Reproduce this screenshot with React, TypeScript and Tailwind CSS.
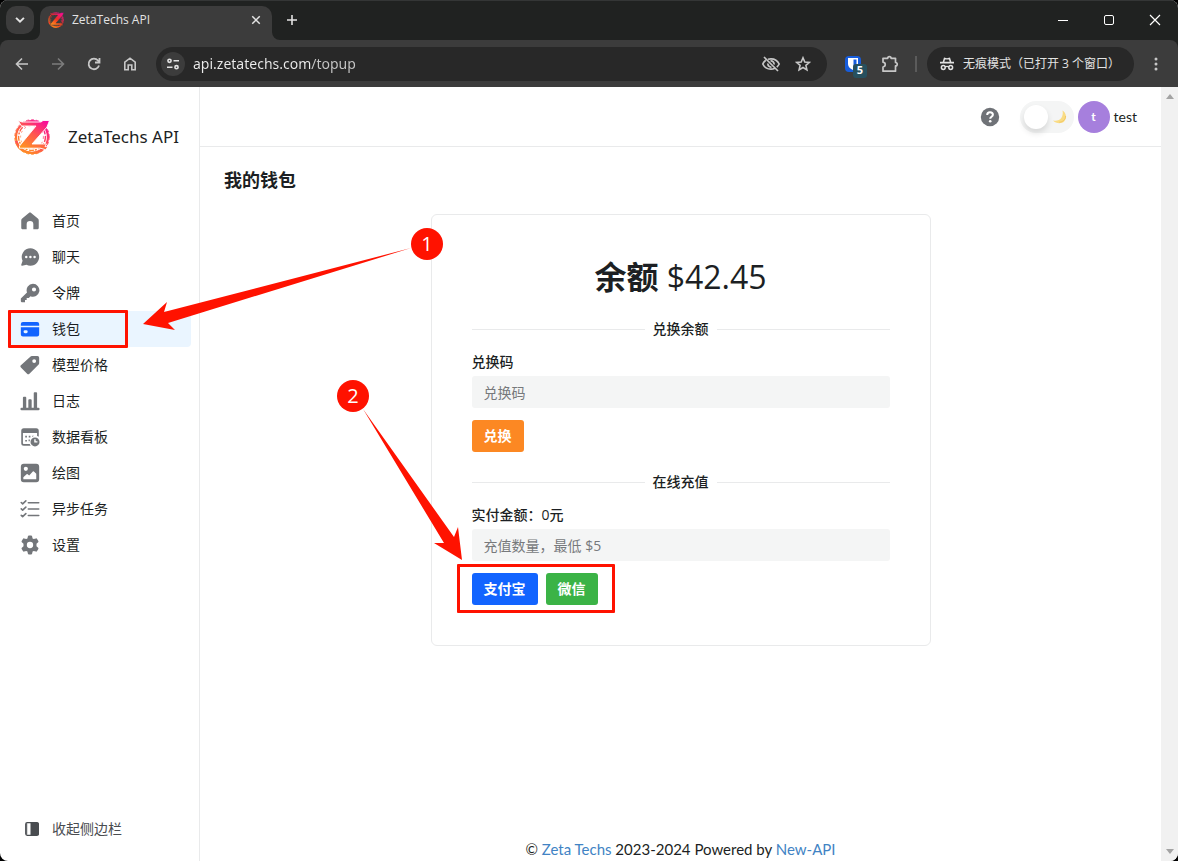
import React from "react";

const UI = "font-['Open_Sans','Noto_Sans_CJK_SC',sans-serif]";

function LogoMark({ className, dark = false }: { className: string; dark?: boolean }) {
  const id = dark ? "logo-tab" : "logo-side";
  return (
    <svg viewBox="0 0 36 36" className={className} aria-hidden="true">
      <defs>
        <linearGradient id={id} x1="0.15" y1="1" x2="0.85" y2="0">
          <stop offset="0" stopColor="#ff9a1c" />
          <stop offset="0.5" stopColor={dark ? "#ee2f22" : "#ff5a4c"} />
          <stop offset="1" stopColor="#f80a9c" />
        </linearGradient>
      </defs>
      <g fill="none" stroke={`url(#${id})`}>
        <circle cx="18" cy="18" r="16" strokeWidth="2.200" />
        <circle cx="18" cy="18" r="13.400" strokeWidth="1.400" strokeDasharray="5 1.500 2 1" />
        <circle cx="18" cy="18" r="11.400" strokeWidth="0.700" strokeDasharray="2 3" />
        <path d="M2 22c2 7 8 11.500 16 12 6 0 11-3 14-8" strokeWidth="2.600" />
        <circle cx="18" cy="18" r="17.300" strokeWidth="0.800" strokeDasharray="3 2" />
      </g>
      <path
        d="M4 1.500l3.500 5.500H22L5.500 27v2.200h21l5 1.500 2.500-2.700-3-.5 1.500-2.500H18L33 8l2.500-6.500H29l-2 1.500H8z"
        fill={`url(#${id})`}
        stroke={dark ? "#3c3c3c" : "#fff"}
        strokeWidth="0.900"
      />
    </svg>
  );
}

const icons: Record<string, React.ReactNode> = {
  home: (
    <path d="M12 1.800c.5 0 1 .2 1.400.5l8 6.700c.7.600 1.100 1.400 1.100 2.300V20c0 1.100-.9 2-2 2H16v-6a4 4 0 0 0-8 0v6H3.500c-1.100 0-2-.9-2-2v-8.700c0-.9.4-1.700 1.100-2.300l8-6.700c.4-.3.9-.5 1.400-.5z" />
  ),
  chat: (
    <path
      fillRule="evenodd"
      d="M12.500 1.500a10.500 10.500 0 1 1-4.700 19.900L2.500 22.500c-.8.100-1.300-.6-1-1.300l1.600-4.600A10.500 10.500 0 0 1 12.500 1.500zM7.500 10.500a1.500 1.500 0 1 0 0 3 1.500 1.500 0 0 0 0-3zm5 0a1.500 1.500 0 1 0 0 3 1.500 1.500 0 0 0 0-3zm5 0a1.500 1.500 0 1 0 0 3 1.500 1.500 0 0 0 0-3z"
    />
  ),
  key: (
    <path
      fillRule="evenodd"
      d="M15.500 1a7.700 7.700 0 1 1-2.900 14.800L10.500 18H8v2.500H6V23H2c-.6 0-1-.4-1-1v-3.500l7.400-7.200A7.700 7.700 0 0 1 15.500 1zm1.300 4.300a2.500 2.500 0 1 0 0 5 2.500 2.500 0 0 0 0-5z"
    />
  ),
  card: (
    <path
      fillRule="evenodd"
      d="M3.500 3.500h17a2.500 2.500 0 0 1 2.500 2.500v2H1V6a2.500 2.500 0 0 1 2.500-2.500zM1 10h22v8.500a2.500 2.500 0 0 1-2.500 2.500h-17A2.500 2.500 0 0 1 1 18.500zm5 3.500a1.500 1.500 0 0 0 0 3.500h1.500a1.500 1.500 0 0 0 0-3.500z"
    />
  ),
  tag: (
    <path
      fillRule="evenodd"
      d="M12.700 1.900c.4-.4.9-.6 1.400-.6H21a2 2 0 0 1 2 2V10c0 .5-.2 1-.6 1.400L11.300 22.500a2 2 0 0 1-2.800 0L1.100 15a2 2 0 0 1 0-2.800zM17 5a2.300 2.300 0 1 0 0 4.600A2.300 2.300 0 0 0 17 5z"
    />
  ),
  bars: (
    <path d="M2 20h20a1.500 1.500 0 0 1 0 3H2a1.500 1.500 0 0 1 0-3zM4.500 7h2c.6 0 1 .4 1 1v12h-4V8c0-.6.400-1 1-1zM11 10h2c.6 0 1 .4 1 1v9h-4v-9c0-.6.400-1 1-1zM17.500 1.500h2c.6 0 1 .4 1 1V20h-4V2.500c0-.6.400-1 1-1z" />
  ),
  board: (
    <>
      <path
        fillRule="evenodd"
        d="M4.500 1.500h15a3 3 0 0 1 3 3v7.300a7 7 0 0 0-2-.9V7.200h-17v12.300a1 1 0 0 0 1 1h7.200c.3.800.7 1.400 1.200 2H4.500a3 3 0 0 1-3-3v-15a3 3 0 0 1 3-3z"
      />
      <path d="M6.300 10.500h2v2h-2zM10.500 10.500h2v2h-2zM14.700 10.500h2l-2 1.500zM6.300 15.500h2v2h-2zM10.300 15h1.500v2h-1.500z" />
      <path fillRule="evenodd" d="M18 12.500a5.400 5.400 0 1 1 0 10.800 5.400 5.400 0 0 1 0-10.800zm-.9 2.300v3.800h3.800V17h-2.100v-2.200z" />
    </>
  ),
  image: (
    <path
      fillRule="evenodd"
      d="M4.500 1h15A3.500 3.500 0 0 1 23 4.500v15a3.500 3.500 0 0 1-3.500 3.500h-15A3.500 3.500 0 0 1 1 19.500v-15A3.500 3.500 0 0 1 4.500 1zM7 4.500a2.500 2.500 0 1 0 0 5 2.500 2.500 0 0 0 0-5zM4 19.500h15.500V13l-2.800-2.700a.9.900 0 0 0-1.300 0L11 15l-1.800-1.500a1 1 0 0 0-1.300 0L4 17z"
    />
  ),
  checks: (
    <g fill="none" stroke="currentColor" strokeWidth="1.900" strokeLinecap="round" strokeLinejoin="round">
      <path d="M10 4.500h12.500M10 12h12.500M10 19.800h12.500" />
      <path d="M1.500 4.200l1.700 1.600L7 2.200M1.500 11.800l1.700 1.600L7 9.800M1.500 19.600l1.700 1.600L7 17.600" />
    </g>
  ),
  gear: (
    <path
      fillRule="evenodd"
      d="M9.500 1.500c.1-.5.6-.9 1.200-.9h2.600c.6 0 1.100.4 1.200.9l.6 2.600 1.400.8 2.600-.8c.5-.2 1.100.1 1.400.6l1.500 2.600c.3.500.2 1.100-.2 1.500l-2 1.800v2.800l2 1.800c.4.400.5 1 .2 1.500l-1.500 2.600c-.3.500-.9.800-1.400.6l-2.600-.8-1.400.8-.6 2.600c-.1.500-.6.900-1.200.9h-2.600c-.6 0-1.100-.4-1.200-.9l-.6-2.600-1.400-.8-2.600.8c-.5.200-1.100-.1-1.400-.6L2 16.700c-.3-.5-.2-1.100.2-1.500l2-1.800v-2.800l-2-1.800C1.800 8.400 1.700 7.800 2 7.300l1.500-2.600c.3-.5.900-.8 1.400-.6l2.600.8 1.400-.8zM12 8.200a3.800 3.800 0 1 0 0 7.600 3.800 3.800 0 0 0 0-7.600z"
    />
  ),
};

const menu = [
  { label: "首页", icon: "home" },
  { label: "聊天", icon: "chat" },
  { label: "令牌", icon: "key" },
  { label: "钱包", icon: "card", active: true },
  { label: "模型价格", icon: "tag" },
  { label: "日志", icon: "bars" },
  { label: "数据看板", icon: "board" },
  { label: "绘图", icon: "image" },
  { label: "异步任务", icon: "checks" },
  { label: "设置", icon: "gear" },
];

function Stroke({ children, className = "size-4", width = 1.6 }: { children: React.ReactNode; className?: string; width?: number }) {
  return (
    <svg viewBox="0 0 16 16" className={className} fill="none" stroke="currentColor" strokeWidth={width} aria-hidden="true">
      {children}
    </svg>
  );
}

function TabStrip() {
  return (
    <div className="flex h-10 items-end border-t border-[#343636] bg-[#202221] text-[#e3e3e3]">
      <button aria-label="搜索标签页" className="mb-1.5 ml-1.5 flex size-7 items-center justify-center rounded-[10px] bg-[#3c3c3c]">
        <Stroke className="size-3.5" width={2.2}>
          <path d="M3.500 5.500L8 10l4.500-4.500" />
        </Stroke>
      </button>
      <div className="relative ml-1.5 flex h-[34px] w-[232px] items-center rounded-t-[10px] bg-[#3c3c3c] pb-1.5 pl-2 pr-2">
        <svg viewBox="0 0 8 8" className="absolute -left-2 bottom-0 size-2" fill="#3c3c3c" aria-hidden="true"><path d="M8 0v8H0a8 8 0 0 0 8-8z" /></svg>
        <svg viewBox="0 0 8 8" className="absolute -right-2 bottom-0 size-2" fill="#3c3c3c" aria-hidden="true"><path d="M0 0v8h8a8 8 0 0 1-8-8z" /></svg>
        <LogoMark className="size-4" dark />
        <span className="ml-2 flex-1 text-xs">ZetaTechs API</span>
        <button aria-label="关闭标签页" className="flex size-4 items-center justify-center">
          <Stroke className="size-3" width={2}><path d="M3 3l10 10M13 3L3 13" /></Stroke>
        </button>
      </div>
      <button aria-label="新标签页" className="mb-3 ml-3 flex size-4 items-center justify-center">
        <Stroke className="size-4"><path d="M8 3v10M3 8h10" /></Stroke>
      </button>
      <div className="mb-3 ml-auto mr-[15px] flex gap-[30px] text-white">
        <button aria-label="最小化"><Stroke width={1}><path d="M3 8.500h10" /></Stroke></button>
        <button aria-label="最大化"><Stroke width={1}><rect x="3.500" y="3.500" width="9" height="9" rx="1.500" /></Stroke></button>
        <button aria-label="关闭"><Stroke width={1.2}><path d="M3 3l10 10M13 3L3 13" /></Stroke></button>
      </div>
    </div>
  );
}

function Toolbar() {
  return (
    <div className="bg-[#202221]">
      <div className="flex h-[47px] items-center rounded-t-lg bg-[#3c3c3c] pl-3.5 pr-3.5 text-[#c7c7c7]">
        <div className="flex gap-5">
          <button aria-label="后退"><Stroke><path d="M14 8H3M8 2.500L2.500 8 8 13.500" /></Stroke></button>
          <button aria-label="前进" className="text-[#7c7c7c]"><Stroke><path d="M2 8h11M8 2.500L13.500 8 8 13.500" /></Stroke></button>
          <button aria-label="重新加载">
            <Stroke width={1.8}><path d="M13 9.500A5.300 5.300 0 1 1 12 4.500L13.500 6M13.500 2v4.500H9" /></Stroke>
          </button>
          <button aria-label="主页">
            <Stroke><path d="M2.800 13.700V6.200L8 2.200l5.200 4v7.500H9.800V9H6.200v4.700z" /></Stroke>
          </button>
        </div>
        <div className="ml-[18px] flex h-[34px] flex-1 items-center rounded-full bg-[#282828] pl-[5px] pr-4">
          <button aria-label="网站信息" className="flex size-6 items-center justify-center rounded-full bg-[#3c3c3c] text-[#e3e3e3]">
            <Stroke className="size-4">
              <circle cx="4.500" cy="4.800" r="1.600" /><path d="M8.500 4.800H14M2 11.200h5.500" /><circle cx="11.500" cy="11.200" r="1.600" />
            </Stroke>
          </button>
          <input
            aria-label="地址栏"
            type="text"
            defaultValue="api.zetatechs.com/topup"
            className="ml-2 h-5 min-w-0 flex-1 bg-[linear-gradient(90deg,#ececec_119px,#c7c7c7_119px)] bg-clip-text font-['Noto_Sans',sans-serif] text-sm leading-5 text-transparent outline-none"
          />
          <div className="flex items-center gap-3.5">
            <button aria-label="第三方 Cookie">
              <svg viewBox="0 0 20 20" className="size-5" fill="none" stroke="currentColor" strokeWidth="1.700" aria-hidden="true">
                <path d="M3 3l14 14M7 5.300A8.700 8.700 0 0 1 10 4.800c3.800 0 6.700 2 8.200 5.200a9 9 0 0 1-2.400 3.100M4.800 6.300A9 9 0 0 0 1.800 10c1.500 3.200 4.400 5.200 8.200 5.200 1.300 0 2.500-.2 3.500-.7M9.500 7a3 3 0 0 1 3.500 3.500M7 9.500a3 3 0 0 0 3.500 3.500" />
              </svg>
            </button>
            <button aria-label="收藏">
              <Stroke><path d="M8 1.800l1.800 4.200 4.600.4-3.500 3 1 4.500L8 11.500l-3.900 2.400 1-4.500-3.500-3 4.600-.4z" /></Stroke>
            </button>
          </div>
        </div>
        <button aria-label="密码管理器" className="relative ml-[18px] size-4 rounded-sm bg-[#175ddc]">
          <svg viewBox="0 0 16 16" className="size-4" aria-hidden="true">
            <path d="M3 2h10v6c0 3-2.500 5-5 6-2.500-1-5-3-5-6z" fill="#fff" />
            <path d="M8.500 3.500h3V8c0 1.800-1.500 3-3 4z" fill="#175ddc" />
          </svg>
          <span className="absolute left-2 top-2 flex size-3.5 items-center justify-center rounded-[3px] bg-[#27505f] text-[11px] font-bold text-white">5</span>
        </button>
        <button aria-label="扩展程序" className="ml-5">
          <svg viewBox="0 0 18 18" className="size-[18px]" fill="none" stroke="currentColor" strokeWidth="1.700" strokeLinejoin="round" aria-hidden="true">
            <path d="M2 3.300h4.700a1.700 1.700 0 0 1 3.400 0h4.400v4.200a1.700 1.700 0 0 1 0 3.400v5.300H2v-4.200c3-.5 3-4.300 0-4.800z" />
          </svg>
        </button>
        <div className="ml-4 h-4 w-0.5 bg-[#5b5b5b]" />
        <button className="ml-2.5 flex h-[34px] w-[207px] items-center gap-2 rounded-full bg-[#282828] pl-3 text-[#e3e3e3]">
          <svg viewBox="0 0 16 16" className="size-4" fill="currentColor" aria-hidden="true">
            <path d="M5 1.500l3 .7 3-.7 1.300 4.300H15v1.600H1V5.800h2.700z" />
            <path d="M6 3.500h4l.7 2.300H5.300z" fill="#282828" />
            <path d="M6 11q2-1.200 4 0" fill="none" stroke="currentColor" strokeWidth="1.400" />
            <circle cx="4.300" cy="11.500" r="1.900" fill="none" stroke="currentColor" strokeWidth="1.500" />
            <circle cx="11.700" cy="11.500" r="1.900" fill="none" stroke="currentColor" strokeWidth="1.500" />
          </svg>
          <span className="whitespace-nowrap text-xs">无痕模式（已打开 3 个窗口）</span>
        </button>
        <button aria-label="菜单" className="ml-3.5">
          <svg viewBox="0 0 16 16" className="size-4" fill="currentColor" aria-hidden="true">
            <circle cx="8" cy="3" r="1.500" /><circle cx="8" cy="8" r="1.500" /><circle cx="8" cy="13" r="1.500" />
          </svg>
        </button>
      </div>
    </div>
  );
}

function Sidebar() {
  return (
    <aside className="flex w-[200px] shrink-0 flex-col border-r border-[#e9eaeb] pb-5 pr-2">
      <div className="mt-8 flex items-center gap-[18px] pl-3.5">
        <LogoMark className="size-9" />
        <span className="whitespace-nowrap font-['Noto_Sans',sans-serif] text-[17px]">ZetaTechs API</span>
      </div>
      <nav className="ml-2 mt-12">
        <ul>
          {menu.map((item) => (
            <li key={item.label} className="relative">
              <a href="#" className={`flex h-9 items-center gap-3 rounded px-3 text-sm ${item.active ? "bg-[#eaf5ff]" : ""}`}>
                <svg viewBox="0 0 24 24" className={`size-5 ${item.active ? "text-[#1264ff]" : "text-[#73767a]"}`} fill="currentColor" aria-hidden="true">
                  {icons[item.icon]}
                </svg>
                {item.label}
              </a>
              {item.active && <span className="pointer-events-none absolute -top-px left-0 h-[38px] w-[120px] rounded-[1px] border-[3px] border-[#ff1200]" />}
            </li>
          ))}
        </ul>
      </nav>
      <button className="mt-auto flex h-6 items-center gap-3 pl-6 text-sm text-[#494c50]">
        <svg viewBox="0 0 16 16" className="size-4" aria-hidden="true">
          <rect x="1.700" y="1.700" width="12.600" height="12.600" rx="1.500" fill="none" stroke="currentColor" strokeWidth="1.200" />
          <path d="M6.500 1.500h7a1.500 1.500 0 0 1 1.500 1.500v10a1.500 1.500 0 0 1-1.500 1.500h-7zM2.200 2.200h1v11.600h-1z" fill="currentColor" />
        </svg>
        收起侧边栏
      </button>
    </aside>
  );
}

function Divider({ children }: { children: React.ReactNode }) {
  return (
    <div className="flex h-6 items-center gap-2 text-sm font-medium">
      <span className="h-px flex-1 bg-[#e9eaeb]" />
      {children}
      <span className="h-px flex-1 bg-[#e9eaeb]" />
    </div>
  );
}

const field = "h-8 w-full rounded-[3px] bg-[#f4f5f5] px-3 text-sm outline-none placeholder:text-[#77797c]";
const button = "h-8 rounded-[3px] px-3 text-sm font-bold text-white";

function WalletCard() {
  return (
    <section className="mx-auto mt-5 w-full max-w-[500px] rounded-md border border-[#e9eaeb] p-10">
      <h2 className="mb-5 mt-0.5 text-center text-[32px] font-bold leading-10">
        余额 <span className="font-normal">$42.45</span>
      </h2>
      <Divider>兑换余额</Divider>
      <form className="mt-[11px]" onSubmit={(e) => e.preventDefault()}>
        <label htmlFor="code" className="mb-1 block text-sm font-medium leading-5">兑换码</label>
        <input id="code" placeholder="兑换码" className={field} />
        <button className={`mt-3 block bg-[#fc8823] ${button}`}>兑换</button>
      </form>
      <div className="mt-[18px]">
        <Divider>在线充值</Divider>
      </div>
      <form className="mt-[11px]" onSubmit={(e) => e.preventDefault()}>
        <label htmlFor="amount" className="mb-1 block text-sm font-medium leading-5">实付金额：0元</label>
        <input id="amount" placeholder="充值数量，最低 $5" className={field} />
        <div className="relative mt-3 flex w-fit gap-2">
          <button className={`bg-[#1264ff] ${button}`}>支付宝</button>
          <button className={`bg-[#3bb346] ${button}`}>微信</button>
          <span className="pointer-events-none absolute -bottom-2 -left-[15px] -right-[17px] -top-[9px] rounded-[1px] border-[3px] border-[#ff1200]" />
        </div>
      </form>
    </section>
  );
}

function TopBar() {
  return (
    <header className="flex h-[60px] items-center justify-end border-b border-[#e9eaeb] pr-6 font-['Lato','Noto_Sans_CJK_SC',sans-serif]">
      <button aria-label="帮助" className="mr-5">
        <svg viewBox="0 0 20 20" className="size-5" aria-hidden="true">
          <circle cx="10" cy="10" r="9.200" fill="#6f7277" />
          <path d="M7.200 7.900c0-1.700 1.200-2.700 2.800-2.700s2.900 1 2.900 2.500c0 2-2.700 2.100-2.700 4" fill="none" stroke="#fff" strokeWidth="2" />
          <circle cx="10.200" cy="14.300" r="1.300" fill="#fff" />
        </svg>
      </button>
      <button role="switch" aria-checked="false" aria-label="深色模式" className="mr-1 flex h-8 w-[54px] items-center justify-between rounded-full bg-[#f4f5f5] pl-1 pr-1.5">
        <span className="size-6 rounded-full bg-white shadow-[0_4px_6px_rgba(0,0,0,0.12)]" />
        <svg viewBox="0 0 16 16" className="size-4" aria-hidden="true">
          <path d="M10.500 1.500c4 2.500 4.500 7.800 1.800 10.800-3 3-8.300 2.500-11.300-.8 3.300.8 6.500 0 8.300-2.500 1.500-2.200 1.800-5 1.200-7.500z" fill="#f9dc85" />
          <path d="M13.600 7c0 3.500-2.600 6-6.300 6.200" fill="none" stroke="#f3c862" strokeWidth="1" />
        </svg>
      </button>
      <button className="flex items-center gap-1 text-sm">
        <span className="flex size-8 items-center justify-center rounded-full bg-[#a67fdd] text-xs font-bold text-white">t</span>
        test
      </button>
    </header>
  );
}

function Scrollbar() {
  return (
    <div className="flex w-[17px] shrink-0 flex-col items-center justify-between bg-[#f1f1f1] py-[7px]" aria-hidden="true">
      <svg viewBox="0 0 8 5" className="h-[5px] w-2" fill="#a3a3a3"><path d="M0 5l4-5 4 5z" /></svg>
      <svg viewBox="0 0 8 5" className="h-[5px] w-2" fill="#a3a3a3"><path d="M0 0l4 5 4-5z" /></svg>
    </div>
  );
}

function Annotations() {
  return (
    <div className="pointer-events-none absolute left-0 top-0 text-[20px] text-white">
      <svg viewBox="0 0 480 580" className="h-[580px] w-[480px]" fill="#ff1200" aria-hidden="true">
        <path d="M143 324L167 302 164 312 411 248 168 323 175 330z" />
        <path d="M363 409L454 537 458 527 462 560 434 543 444 543z" />
      </svg>
      <span className="absolute left-[411px] top-[228px] flex size-8 items-center justify-center rounded-full bg-[#ff1200]">1</span>
      <span className="absolute left-[337px] top-[380px] flex size-8 items-center justify-center rounded-full bg-[#ff1200]">2</span>
    </div>
  );
}

export default function App() {
  return (
    <div className="bg-black">
      <div className={`relative flex min-h-screen flex-col overflow-hidden rounded-lg bg-white text-[#1c1f23] ${UI}`}>
        <TabStrip />
        <Toolbar />
        <div className="flex flex-1">
          <Sidebar />
          <div className="flex min-w-0 flex-1 flex-col">
            <TopBar />
            <main className="flex flex-1 flex-col px-6 pt-5">
              <h1 className="text-lg font-bold leading-[27px]">我的钱包</h1>
              <WalletCard />
              <footer className="mt-auto text-center font-['Lato',sans-serif] text-[15px] leading-6">
                © <a href="#" className="text-[#4183c4]">Zeta Techs</a> 2023-2024 Powered by <a href="#" className="text-[#4183c4]">New-API</a>
              </footer>
            </main>
          </div>
          <Scrollbar />
        </div>
        <Annotations />
      </div>
    </div>
  );
}
